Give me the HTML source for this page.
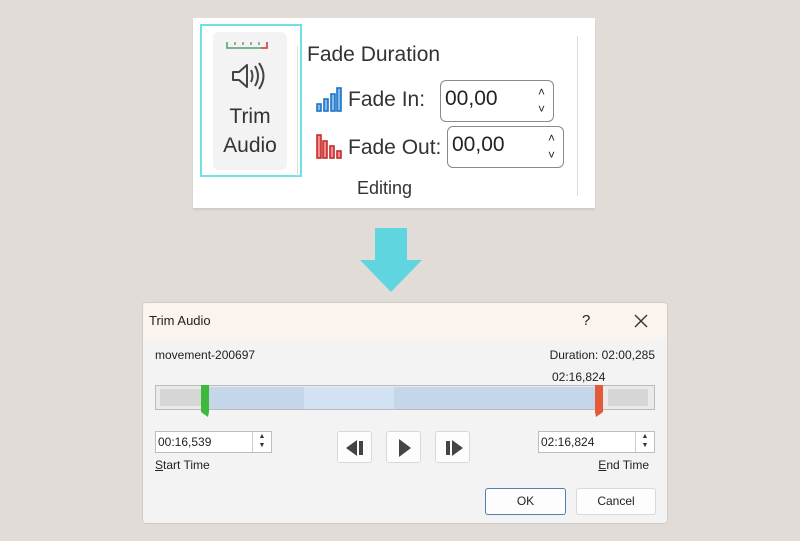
<!DOCTYPE html>
<html><head><meta charset="utf-8"><style>
*{margin:0;padding:0;box-sizing:border-box}
body{width:800px;height:541px;background:#e1dcd8;font-family:"Liberation Sans",sans-serif;position:relative;overflow:hidden;color:#222}
.a{position:absolute}
.panel{left:193px;top:18px;width:402px;height:190px;background:#fff;box-shadow:0 2px 2px #cfcac6}
.dlg{left:142px;top:302px;width:526px;height:222px;background:#f3f3f3;border:1px solid #d0ccc8;border-radius:4px;overflow:hidden}
.tb{left:0;top:0;width:100%;height:36px;background:#faf3ee}
.inp{background:#fff;border:1px solid #bdbdbd;font-size:12px;padding:3px 2px;height:22px}
.spin{border-left:1px solid #ccc;width:19px;height:20px;top:0;right:0;font-size:7px;line-height:9px;text-align:center;color:#333}
.btn{background:#fdfdfd;border:1px solid #d8d8d8;border-radius:3px}
.rb{border:1px solid #8a8a8a;border-radius:6px;background:#fff;font-size:21px;padding:6px 4px}
</style></head><body>
<div class="a panel">
  <div class="a" style="left:7px;top:6px;width:102px;height:153px;border:2px solid #6ee0e8"></div>
  <div class="a" style="left:20px;top:14px;width:74px;height:138px;background:#f3f3f3;border-radius:6px"></div>
  <svg class="a" style="left:30px;top:20px" width="50" height="60" viewBox="0 0 50 60">
    <path d="M4 4v6h40v-6" stroke="#4aa36a" stroke-width="1.5" fill="none"/>
    <path d="M38 10h6v-6" stroke="#d44" stroke-width="1.5" fill="none"/>
    <path d="M12 4v3M20 4v3M28 4v3M36 4v3" stroke="#555" stroke-width="1"/>
    <path d="M10 34h6l8-7v22l-8-7h-6z" stroke="#444" stroke-width="2" fill="none" stroke-linejoin="round"/>
    <path d="M28 32q3 6 0 12M32 28q6 10 0 20M36 25q9 13 0 26" stroke="#444" stroke-width="2" fill="none"/>
  </svg>
  <div class="a" style="left:20px;top:84px;width:74px;text-align:center;font-size:21px;line-height:29px;color:#333">Trim<br>Audio</div>
  <div class="a" style="left:104px;top:28px;width:1px;height:130px;background:#ddd"></div>
  <div class="a" style="left:384px;top:18px;width:1px;height:160px;background:#ddd"></div>
  <div class="a" style="left:114px;top:25px;font-size:21px;color:#333">Fade Duration</div>
  <svg class="a" style="left:122px;top:68px" width="28" height="28"><g stroke="#1d72c4" stroke-width="1.6" fill="#7fbaf0"><rect x="2" y="18" width="4" height="7"/><rect x="9" y="13" width="4" height="12"/><rect x="16" y="8" width="4" height="17"/><rect x="22" y="2" width="4" height="23"/></g></svg>
  <div class="a" style="left:155px;top:70px;font-size:21px;color:#333">Fade In:</div>
  <div class="a rb" style="left:247px;top:62px;width:114px;height:42px">00,00<span class="a" style="right:8px;top:3px;font-size:12px;line-height:17px">˄<br>˅</span></div>
  <svg class="a" style="left:122px;top:115px" width="28" height="28"><g stroke="#c42d2d" stroke-width="1.6" fill="#f58a8a"><rect x="2" y="2" width="4" height="23"/><rect x="8" y="8" width="4" height="17"/><rect x="15" y="13" width="4" height="12"/><rect x="22" y="18" width="4" height="7"/></g></svg>
  <div class="a" style="left:155px;top:118px;font-size:21px;color:#333">Fade Out:</div>
  <div class="a rb" style="left:254px;top:108px;width:117px;height:42px">00,00<span class="a" style="right:8px;top:3px;font-size:12px;line-height:17px">˄<br>˅</span></div>
  <div class="a" style="left:164px;top:160px;font-size:18px;color:#333">Editing</div>
</div>
<svg class="a" style="left:360px;top:228px" width="64" height="66"><path d="M15 0h32v32h15l-31 32l-31-32h15z" fill="#5fd5df"/></svg>
<div class="a dlg">
  <div class="a tb"></div>
  <div class="a" style="left:6px;top:10px;font-size:13px">Trim Audio</div>
  <div class="a" style="left:439px;top:9px;font-size:15px">?</div>
  <svg class="a" style="left:490px;top:10px" width="16" height="16"><path d="M2 2l12 12M14 2l-12 12" stroke="#333" stroke-width="1.4"/></svg>
  <div class="a" style="left:12px;top:45px;font-size:12px">movement-200697</div>
  <div class="a" style="right:12px;top:45px;font-size:12px">Duration: 02:00,285</div>
  <div class="a" style="left:409px;top:67px;font-size:12px">02:16,824</div>
  <div class="a" style="left:12px;top:82px;width:500px;height:25px;background:#eaeaea;border:1px solid #bbb">
    <div class="a" style="left:4px;top:3px;width:44px;height:17px;background:#d6d6d6"></div>
    <div class="a" style="left:52px;top:1px;width:392px;height:22px;background:#c5d6ea"></div>
    <div class="a" style="left:148px;top:1px;width:90px;height:22px;background:#d2e2f2"></div>
    <div class="a" style="left:452px;top:3px;width:40px;height:17px;background:#d6d6d6"></div>
  </div>
  <svg class="a" style="left:58px;top:82px" width="9" height="33"><path d="M0 0h8v27l-1 5l-7-5z" fill="#3cb83a"/></svg>
  <svg class="a" style="left:452px;top:82px" width="9" height="33"><path d="M0 0h8v27l-7 5l-1-5z" fill="#e45a36"/></svg>
  <div class="a inp" style="left:12px;top:128px;width:117px">00:16,539<div class="a spin">▲<br>▼</div></div>
  <div class="a" style="left:12px;top:155px;font-size:12px"><u>S</u>tart Time</div>
  <div class="a inp" style="left:395px;top:128px;width:117px">02:16,824<div class="a spin">▲<br>▼</div></div>
  <div class="a" style="right:18px;top:155px;font-size:12px"><u>E</u>nd Time</div>
  <div class="a btn" style="left:194px;top:128px;width:35px;height:32px"><svg width="35" height="32"><path d="M8 16l11-8v16z" fill="#444"/><rect x="21" y="9" width="4" height="14" fill="#444"/></svg></div>
  <div class="a btn" style="left:243px;top:128px;width:35px;height:32px"><svg width="35" height="32"><path d="M12 7l12 9l-12 9z" fill="#444"/></svg></div>
  <div class="a btn" style="left:292px;top:128px;width:35px;height:32px"><svg width="35" height="32"><rect x="10" y="9" width="4" height="14" fill="#444"/><path d="M16 8l11 8l-11 8z" fill="#444"/></svg></div>
  <div class="a btn" style="left:342px;top:185px;width:81px;height:27px;border:1px solid #4f7fb3;text-align:center;font-size:12px;line-height:25px">OK</div>
  <div class="a btn" style="left:433px;top:185px;width:80px;height:27px;text-align:center;font-size:12px;line-height:25px">Cancel</div>
</div>
</body></html>
